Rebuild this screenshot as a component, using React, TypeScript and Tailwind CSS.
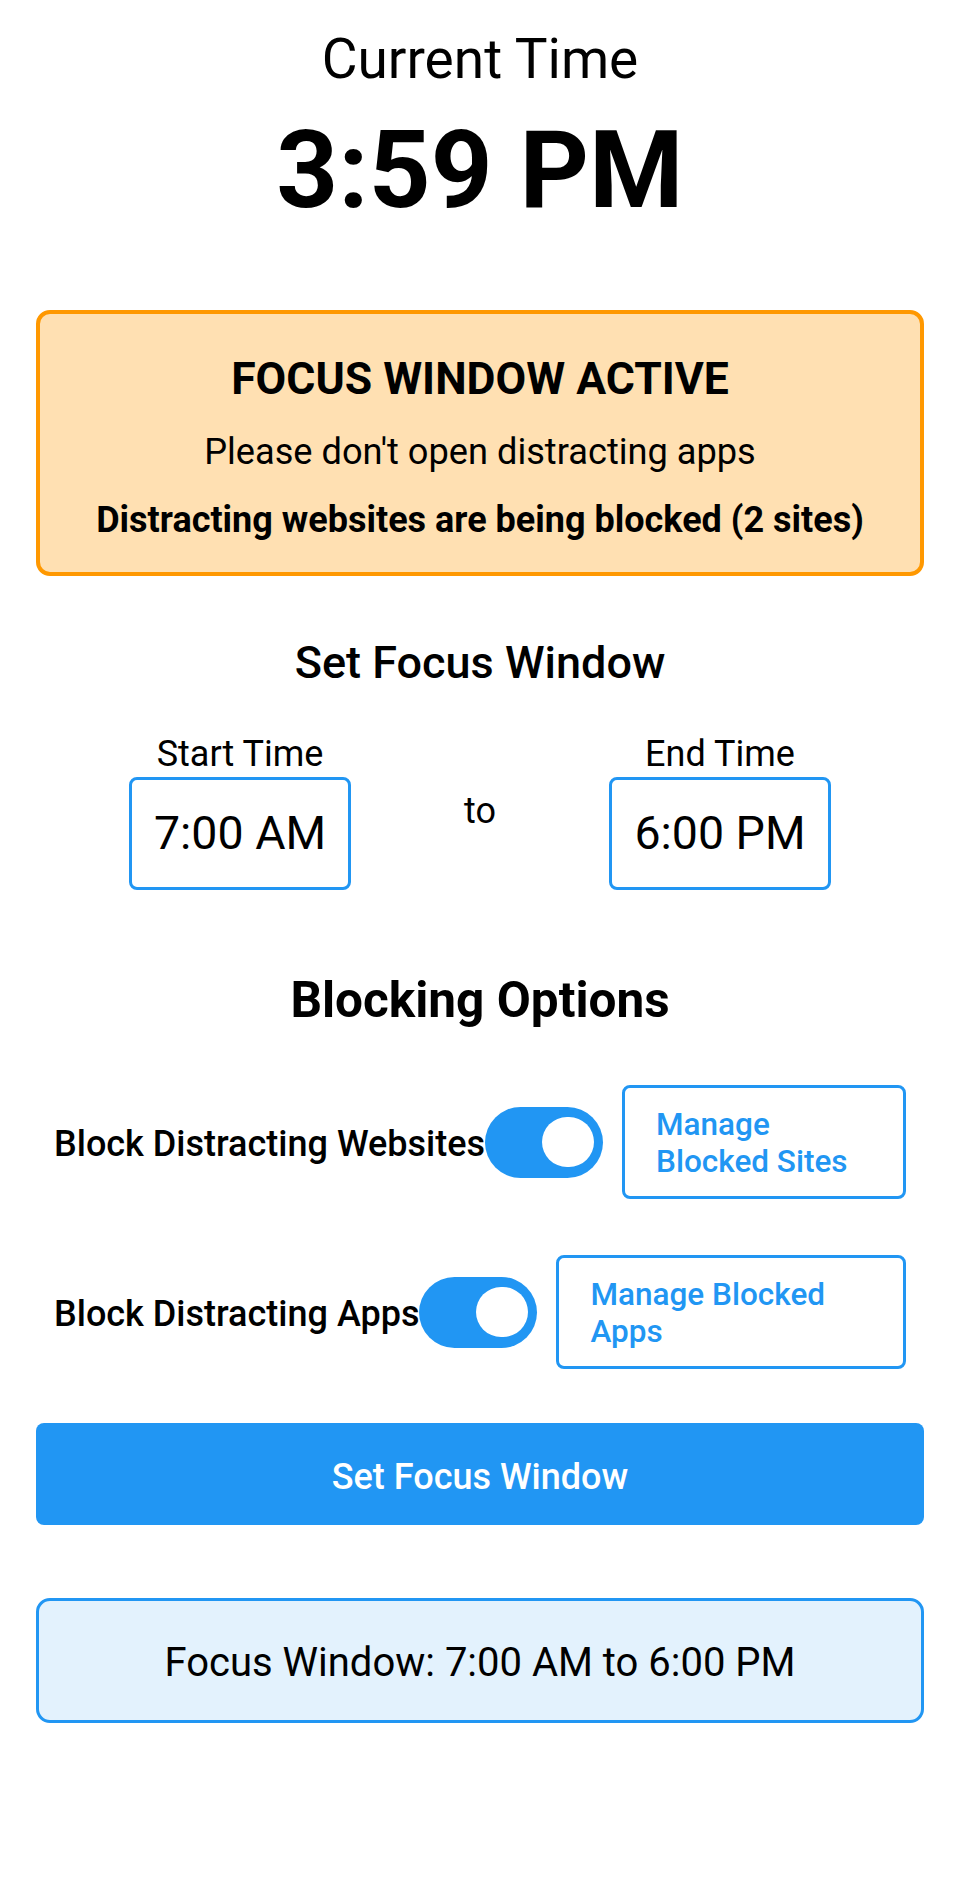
import { useState } from "react";

function Toggle({ on }: { on: boolean }) {
  return (
    <div
      className={`flex h-[71px] w-[118px] shrink-0 items-center rounded-full px-[9px] ${
        on ? "justify-end bg-[#2196F3]" : "justify-start bg-gray-300"
      }`}
    >
      <div className="h-[50px] w-[52px] rounded-full bg-white" />
    </div>
  );
}

function OptionRow({ label, button, on }: { label: string; button: string; on: boolean }) {
  return (
    <div className="flex items-center px-[18px]">
      <span className="whitespace-nowrap pt-[4px] text-[36px] font-medium leading-[43px] text-black">{label}</span>
      <Toggle on={on} />
      <button className="ml-[19px] min-h-[114px] flex-1 rounded-[8px] border-[3px] border-[#2196F3] bg-white px-[31px] pb-[15px] pt-[17px] text-left text-[31.5px] font-medium leading-[37.5px] text-[#2196F3]">
        {button}
      </button>
    </div>
  );
}

function TimeBox({ label, value }: { label: string; value: string }) {
  return (
    <div className="flex flex-col items-center">
      <span className="text-[36px] leading-[43px] text-black">{label}</span>
      <div className="mt-[1px] flex h-[113px] w-[222px] items-center justify-center rounded-[8px] border-[3px] border-[#2196F3] bg-white">
        <span className="text-[46.5px] leading-[53px] text-black">{value}</span>
      </div>
    </div>
  );
}

export default function App() {
  const [webOn] = useState(true);
  const [appsOn] = useState(true);

  return (
    <div className="min-h-[1888px] w-full bg-white px-[36px] font-['Roboto',sans-serif] text-black">
      {/* Clock */}
      <div className="pt-[26px] text-center text-[55px] leading-[66px]">Current Time</div>
      <div className="mt-[22px] text-center text-[108px] font-bold leading-[112px]">3:59 PM</div>

      {/* Active banner */}
      <div className="mt-[84px] rounded-[14px] border-[4px] border-[#FF9800] bg-[#FFE0B2] px-4 pb-[30px] pt-[39px] text-center">
        <div className="text-[44.5px] font-bold leading-[53px]">FOCUS WINDOW ACTIVE</div>
        <div className="mt-[24px] text-[36.2px] leading-[44px]">Please don't open distracting apps</div>
        <div className="mt-[24px] text-[36px] font-bold leading-[44px]">
          Distracting websites are being blocked (2 sites)
        </div>
      </div>

      {/* Window picker */}
      <div className="mt-[60px] text-center text-[45px] font-medium leading-[53px]">Set Focus Window</div>
      <div className="mt-[44px] flex items-center justify-center gap-[113px]">
        <TimeBox label="Start Time" value="7:00 AM" />
        <span className="text-[36px] leading-[43px]">to</span>
        <TimeBox label="End Time" value="6:00 PM" />
      </div>

      {/* Blocking */}
      <div className="mt-[81px] text-center text-[49.5px] font-bold leading-[59px]">Blocking Options</div>
      <div className="mt-[55px] flex flex-col gap-[56px]">
        <OptionRow label="Block Distracting Websites" button="Manage Blocked Sites" on={webOn} />
        <OptionRow label="Block Distracting Apps" button="Manage Blocked Apps" on={appsOn} />
      </div>

      <button className="mt-[54px] flex h-[102px] w-full items-center justify-center rounded-[8px] bg-[#2196F3] pt-[6px] text-[36px] font-medium text-white">
        Set Focus Window
      </button>

      <div className="mt-[73px] flex h-[125px] items-center justify-center rounded-[14px] border-[3px] border-[#2196F3] bg-[#E3F2FD] pt-[4px] text-[40px] leading-[47px]">
        Focus Window: 7:00 AM to 6:00 PM
      </div>
    </div>
  );
}
